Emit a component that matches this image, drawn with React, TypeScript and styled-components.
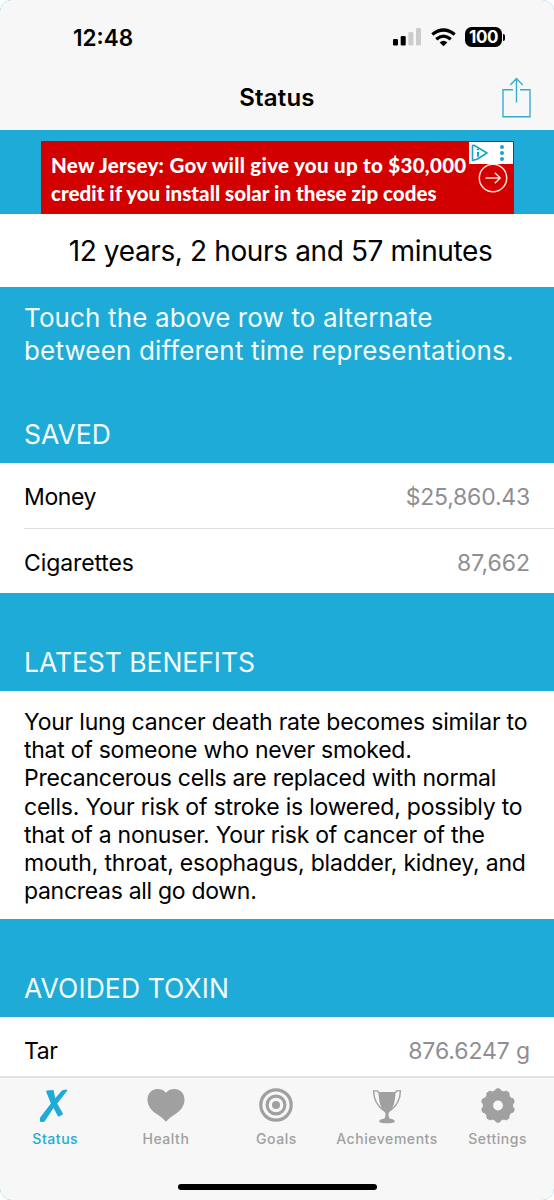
import React from "react";
import styled, { createGlobalStyle } from "styled-components";

const BLUE = "#1eabd8";
const GRAY = "#a0a0a0";

const GlobalStyle = createGlobalStyle`
  * { box-sizing: border-box; }
  body { margin: 0; background: #fff; font-family: Inter, "Liberation Sans", sans-serif; color: #000; }
`;

const Screen = styled.div`
  width: 554px;
  height: 1200px;
  display: flex;
  flex-direction: column;
  overflow: hidden;
  border-radius: 12px;
  background: ${BLUE};
`;

const Top = styled.header`
  flex: none;
  height: 130px;
  background: #f7f7f7;
`;

const StatusBar = styled.div`
  height: 65px;
  padding: 9px 49px 0 73px;
  display: flex;
  align-items: center;
  justify-content: space-between;
`;

const Clock = styled.span`
  font-size: 22.5px;
  font-weight: 600;
  letter-spacing: 0;
`;

const Indicators = styled.div`
  display: flex;
  align-items: center;
`;

const NavBar = styled.div`
  height: 65px;
  padding: 0 23px 0 0;
  display: grid;
  grid-template-columns: 1fr auto 1fr;
  align-items: center;
`;

const Title = styled.h1`
  grid-column: 2;
  margin: 0 -23px 0 0;
  font-size: 24px;
  font-weight: 600;
  line-height: 65px;
  letter-spacing: 0.2px;
`;

const ShareButton = styled.button`
  justify-self: end;
  display: flex;
  padding: 0;
  border: 0;
  background: none;
`;

const AdArea = styled.div`
  flex: none;
  height: 84px;
  padding: 11px 40px 0 41px;
`;

const Ad = styled.div`
  position: relative;
  height: 73px;
  padding: 10px 0 0 10px;
  background: #d30000;
  color: #fff;
  font-family: Lato, sans-serif;
  font-weight: 900;
  font-size: 20.5px;
  line-height: 28px;
  white-space: nowrap;
`;

const AdLine = styled.div<{ $spacing: number }>`
  letter-spacing: ${(p) => p.$spacing}px;
`;

const AdChoices = styled.svg`
  position: absolute;
  top: 1px;
  right: 1px;
`;

const AdArrow = styled.svg`
  position: absolute;
  top: 22px;
  right: 6px;
`;

const Elapsed = styled.div`
  flex: none;
  height: 73px;
  padding: 1px 0 0 7px;
  background: #fff;
  text-align: center;
  font-size: 28px;
  line-height: 73px;
  white-space: nowrap;
  letter-spacing: -0.37px;
`;

const Hint = styled.p`
  flex: none;
  height: 118px;
  margin: 0;
  padding: 15px 0 0 24px;
  color: #f4fcff;
  font-size: 26px;
  line-height: 32.5px;
  white-space: nowrap;
`;

const Line = styled.span<{ $spacing?: number }>`
  display: block;
  letter-spacing: ${(p) => p.$spacing ?? 0}px;
`;

const SectionTitle = styled.h2<{ $height: number; $spacing: number }>`
  flex: none;
  height: ${(p) => p.$height}px;
  margin: 0;
  padding: 0 24px 12px;
  display: flex;
  align-items: flex-end;
  color: #f4fcff;
  font-size: 26.5px;
  font-weight: 400;
  line-height: 34px;
  letter-spacing: ${(p) => p.$spacing}px;
`;

const Group = styled.section<{ $height: number }>`
  flex: none;
  height: ${(p) => p.$height}px;
  padding-left: 24px;
  background: #fff;
`;

const Row = styled.div`
  height: 65px;
  padding: 3px 24px 0 0;
  display: flex;
  align-items: center;
  justify-content: space-between;
  font-size: 23px;
  & + & { border-top: 1px solid #dedee0; }
`;

const Label = styled.span<{ $spacing: number }>`
  letter-spacing: ${(p) => p.$spacing}px;
`;

const Value = styled.span<{ $spacing: number }>`
  color: #8e8e93;
  letter-spacing: ${(p) => p.$spacing}px;
`;

const Benefits = styled.p`
  margin: 0;
  padding-top: 17px;
  font-size: 23px;
  line-height: 28.17px;
  white-space: nowrap;
`;

const TabBar = styled.nav`
  flex: none;
  height: 124px;
  border-top: 2px solid #e2e2e2;
  background: #f7f7f7;
  display: flex;
  flex-direction: column;
  align-items: center;
`;

const Tabs = styled.div`
  width: 554px;
  height: 106px;
  padding-top: 10px;
  display: grid;
  grid-template-columns: repeat(5, 110.6px);
`;

const Tab = styled.div<{ $active?: boolean }>`
  display: flex;
  flex-direction: column;
  align-items: center;
  gap: 5px;
  color: ${(p) => (p.$active ? BLUE : GRAY)};
  font-size: 14px;
  font-weight: 500;
  line-height: 20px;
  letter-spacing: 0.55px;
`;

const HomeBar = styled.div`
  width: 199px;
  height: 6px;
  border-radius: 3px;
  background: #000;
`;

const gearPath = (() => {
  const teeth = 10;
  const pts: string[] = [];
  for (let i = 0; i < teeth; i++) {
    const center = (i * 360) / teeth - 90;
    [[-13, 14.8], [-5, 16.7], [5, 16.7], [13, 14.8]].forEach(([d, r]) => {
      const a = ((center + d) * Math.PI) / 180;
      pts.push(`${(18 + r * Math.cos(a)).toFixed(2)} ${(17.5 + r * Math.sin(a)).toFixed(2)}`);
    });
  }
  return `M${pts.join("L")}Z`;
})();

const StatusIcon = () => (
  <svg width="38" height="36" viewBox="0.5 0 38 36" fill="currentColor">
    <path d="M11.500 2.600 17 2q1 0 1.300 1l1.400 7.200L26 3q.8-.9 2-1l3-.4q1.400.1.500 1.300L21.700 15.600l5.700 9.800q.4.800-.4 1.200l-3.400 1.800q-.9.400-1.300-.5L18 20 9.400 33.100q-.6.900-1.600.9H5.500q-1 0-1-1v-2.600q0-.8.500-1.400l10.400-13.400-4.600-11.700q-.3-1 .7-1.300Z" />
  </svg>
);

const HeartIcon = () => (
  <svg width="38" height="36" viewBox="0 0 38 36" fill="currentColor">
    <path d="M19 4.700C21.200 2 24.200 1 27.400 1 33.200 1 37.500 5.500 37.500 11.500 37.500 17.500 34.300 21.800 29.500 25.200 25.500 28 21.500 30.500 19 33.700 16.500 30.500 12.500 28 8.500 25.200 3.700 21.800.500 17.500.500 11.500.500 5.500 4.800 1 10.600 1 13.800 1 16.800 2 19 4.700Z" />
  </svg>
);

const GoalsIcon = () => (
  <svg width="36" height="36" viewBox="0 0 36 36" fill="none" stroke="currentColor" strokeWidth="3.2">
    <circle cx="18" cy="17" r="15.200" />
    <circle cx="18" cy="17" r="8.900" />
    <circle cx="18" cy="17" r="4" fill="currentColor" stroke="none" />
  </svg>
);

const TrophyIcon = () => (
  <svg width="36" height="36" viewBox="0 0 36 36" fill="currentColor">
    <path d="M9.500 4h17c-.3 10-2.300 17-6.500 20.500-.9 1.200-.6 4.300.8 6.300 3.500.3 5 1.200 5 2.700 0 1.100-3 1.800-7.800 1.800s-7.800-.7-7.800-1.800c0-1.500 1.500-2.400 5-2.700 1.400-2 1.700-5.100.8-6.300C11.800 21 9.800 14 9.500 4Z" />
    <path d="M10 5.200 8.500 2.900H4.600C4.700 10.500 7.500 17 14.500 22.500M26 5.200l1.500-2.300h3.900C31.300 10.500 28.500 17 21.500 22.500" fill="none" stroke="currentColor" strokeWidth="1.400" />
  </svg>
);

const SettingsIcon = () => (
  <svg width="36" height="36" viewBox="0 0 36 36">
    <path d={gearPath} fill="currentColor" stroke="currentColor" strokeWidth="1" strokeLinejoin="round" />
    <circle cx="18" cy="17.500" r="4.900" fill="#f7f7f7" />
  </svg>
);

const SignalIcon = () => (
  <svg width="30" height="20" viewBox="0 0 30 20">
    <rect x="1" y="12" width="5" height="6.500" rx="1.300" />
    <rect x="8.700" y="9" width="5" height="9.500" rx="1.300" />
    <rect x="16.400" y="5" width="5" height="13.500" rx="1.300" fill="#ccc" />
    <rect x="24" y="1" width="5" height="17.500" rx="1.300" fill="#ccc" />
  </svg>
);

const WifiIcon = () => (
  <svg width="25" height="19" viewBox="0 0 25 19" fill="none" stroke="#000" strokeWidth="3.200">
    <path d="M1.300 6.600Q12.500-2.600 23.700 6.600" />
    <path d="M5.200 11.200Q12.500 5 19.800 11.200" />
    <path d="M12.500 18.300 8.600 14.400Q12.500 11.300 16.400 14.400Z" fill="#000" stroke="none" />
  </svg>
);

const Battery = styled.div`
  width: 37px;
  height: 20px;
  border-radius: 6.5px;
  background: #000;
  color: #fff;
  font-size: 17px;
  font-weight: 700;
  line-height: 20px;
  letter-spacing: -0.4px;
  text-align: center;
`;

const BatteryTip = styled.div`
  width: 2px;
  height: 7px;
  margin-left: 1px;
  border-radius: 0 3px 3px 0;
  background: #000;
`;

const Gap = styled.div<{ $w: number }>`
  width: ${(p) => p.$w}px;
`;

export default function App() {
  return (
    <>
      <GlobalStyle />
      <Screen>
        <Top>
          <StatusBar>
            <Clock>12:48</Clock>
            <Indicators>
              <SignalIcon />
              <Gap $w={9} />
              <WifiIcon />
              <Gap $w={9} />
              <Battery>100</Battery>
              <BatteryTip />
            </Indicators>
          </StatusBar>
          <NavBar>
            <Title>Status</Title>
            <ShareButton aria-label="Share">
              <svg width="29" height="41" viewBox="0 0 29 41" fill="none" stroke="#36afcd" strokeWidth="1.400">
                <path d="M11 12.700H1V39.700H28V12.700H18M14.500 25.500V1.500M8.300 8 14.500 1.500 20.700 8" />
              </svg>
            </ShareButton>
          </NavBar>
        </Top>

        <AdArea>
          <Ad>
            <AdLine $spacing={0.29}>New Jersey: Gov will give you up to $30,000</AdLine>
            <AdLine $spacing={0.04}>credit if you install solar in these zip codes</AdLine>
            <AdArrow width="30" height="30" viewBox="0 0 30 30" fill="none" stroke="#ffe1dc" strokeWidth="1.500">
              <circle cx="15" cy="15" r="13.700" />
              <path d="M7.500 15H22M16.800 9.700 22.200 15 16.800 20.300" />
            </AdArrow>
            <AdChoices width="44" height="22" viewBox="0 0 44 22" fill="none">
              <rect width="44" height="22" fill="#fff" />
              <path d="M3.500 3.500V18.500L8 17.200 18 11 5 3.300Z" stroke="#16a5c4" strokeWidth="1.600" strokeLinejoin="round" />
              <path d="M9 6.700V8.200M9 10V14.800" stroke="#16a5c4" strokeWidth="2" />
              <g fill="#16a5c4">
                <circle cx="33" cy="5" r="2" />
                <circle cx="33" cy="11" r="2" />
                <circle cx="33" cy="17" r="2" />
              </g>
            </AdChoices>
          </Ad>
        </AdArea>

        <Elapsed>12 years, 2 hours and 57 minutes</Elapsed>

        <Hint>
          <Line $spacing={0.13}>Touch the above row to alternate</Line>
          <Line $spacing={0.15}>between different time representations.</Line>
        </Hint>

        <SectionTitle $height={58} $spacing={0}>SAVED</SectionTitle>
        <Group $height={130}>
          <Row><Label $spacing={-0.4}>Money</Label><Value $spacing={-0.2}>$25,860.43</Value></Row>
          <Row><Label $spacing={-0.1}>Cigarettes</Label><Value $spacing={0}>87,662</Value></Row>
        </Group>

        <SectionTitle $height={98} $spacing={-0.05}>LATEST BENEFITS</SectionTitle>
        <Group $height={228}>
          <Benefits>
            <Line $spacing={-0.21}>Your lung cancer death rate becomes similar to</Line>
            <Line $spacing={-0.26}>that of someone who never smoked.</Line>
            <Line $spacing={-0.25}>Precancerous cells are replaced with normal</Line>
            <Line $spacing={-0.22}>cells. Your risk of stroke is lowered, possibly to</Line>
            <Line $spacing={-0.26}>that of a nonuser. Your risk of cancer of the</Line>
            <Line $spacing={-0.19}>mouth, throat, esophagus, bladder, kidney, and</Line>
            <Line $spacing={-0.3}>pancreas all go down.</Line>
          </Benefits>
        </Group>

        <SectionTitle $height={98} $spacing={0.1}>AVOIDED TOXIN</SectionTitle>
        <Group $height={59}>
          <Row><Label $spacing={-0.4}>Tar</Label><Value $spacing={-0.1}>876.6247 g</Value></Row>
        </Group>

        <TabBar>
          <Tabs>
            <Tab $active><StatusIcon />Status</Tab>
            <Tab><HeartIcon />Health</Tab>
            <Tab><GoalsIcon />Goals</Tab>
            <Tab><TrophyIcon />Achievements</Tab>
            <Tab><SettingsIcon />Settings</Tab>
          </Tabs>
          <HomeBar />
        </TabBar>
      </Screen>
    </>
  );
}
